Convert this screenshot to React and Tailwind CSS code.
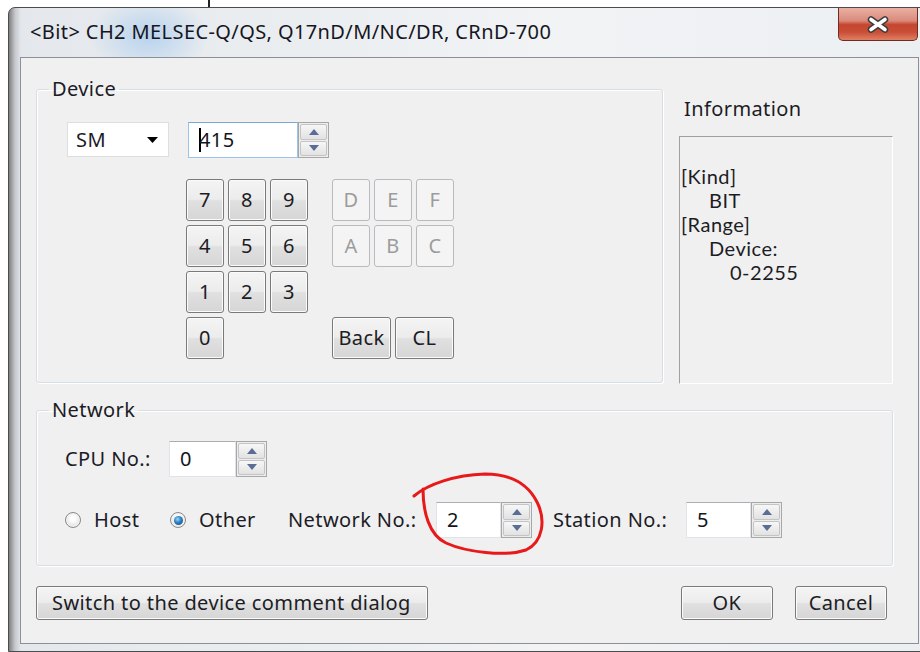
import React from 'react';

const FONT = "font-['Noto_Sans',_'DejaVu_Sans',_sans-serif] tracking-[0.4px]";

// Win7-style push button, with a greyed-out look for keys that don't apply
function Btn({ children, className = '', disabled = false }) {
  return (
    <button
      className={`flex items-center justify-center rounded-[3px] border text-[20px] leading-none ${
        disabled
          ? 'border-[#b7bbbe] bg-[#f4f4f4] text-[#9c9c9c]'
          : 'border-[#7a7a7a] bg-[linear-gradient(to_bottom,#f4f4f4_0%,#ececec_48%,#e0e0e0_52%,#d6d6d6_100%)] text-[#1c1c24] shadow-[inset_0_0_0_1px_#fbfbfb]'
      } ${className}`}
    >
      {children}
    </button>
  );
}

function SpinArrow({ up }) {
  return (
    <div className="flex-1 flex items-center justify-center rounded-[2px] border border-[#c4c4c4] bg-[linear-gradient(to_bottom,#f7f7f7,#e2e2e2)]">
      <svg width="10" height="6" viewBox="0 0 10 6">
        <path d={up ? 'M0 6 L5 0 L10 6 Z' : 'M0 0 L5 6 L10 0 Z'} fill="#5a6d96" />
      </svg>
    </div>
  );
}

// numeric edit box with an up/down spinner on its right
function Spin({ value, className = '', focused = false, caret = false }) {
  return (
    <div className={`flex h-[36px] ${className}`}>
      <div
        className={`flex-1 flex items-center pl-[10px] bg-white border text-[20px] text-[#141420] ${
          focused
            ? 'border-[#9cc3ea] border-t-[#7aa7d6]'
            : 'border-[#e2e3ea] border-t-[#abadb3]'
        }`}
      >
        {caret && <span className="inline-block w-[2px] h-[24px] bg-black -mr-[2px]" />}
        {value}
      </div>
      <div className="w-[31px] flex flex-col gap-[1px] p-[1px] border border-[#a7a7a7] bg-[#ededed]">
        <SpinArrow up />
        <SpinArrow />
      </div>
    </div>
  );
}

function Radio({ checked, label }) {
  return (
    <div className="flex items-center gap-[13px]">
      <span className="w-[16px] h-[16px] rounded-full border border-[#8a8a8a] bg-[radial-gradient(circle_at_50%_40%,#ffffff_20%,#d2d2d2_100%)] shadow-[inset_0_0_0_1px_#f4f4f4] flex items-center justify-center">
        {checked && (
          <span className="w-[9px] h-[9px] rounded-full bg-[radial-gradient(circle_at_40%_35%,#9ad6f7_0%,#2a7cc0_45%,#134a7c_100%)]" />
        )}
      </span>
      <span>{label}</span>
    </div>
  );
}

function Group({ title, className = '', children }) {
  return (
    <fieldset
      className={`rounded-[3px] border border-[#d5dfe5] shadow-[inset_1px_1px_0_#ffffff,1px_1px_0_#ffffff] ${className}`}
    >
      <legend className="ml-[12px] px-[3px] leading-[24px]">{title}</legend>
      {children}
    </fieldset>
  );
}

export default function App() {
  const digits = ['7', '8', '9', '4', '5', '6', '1', '2', '3'];
  const hex = ['D', 'E', 'F', 'A', 'B', 'C'];

  return (
    <div className={`relative w-[920px] h-[652px] overflow-hidden bg-white ${FONT}`}>
      {/* stray text cursor above the window */}
      <div className="h-[7px] flex">
        <div className="ml-[208px] w-[2px] h-[7px] bg-[#222]" />
      </div>

      {/* dialog window */}
      <div className="ml-[8px] w-[924px] h-[645px] rounded-tl-[7px] border border-[#4c4c4c] flex flex-col bg-[radial-gradient(ellipse_60px_40px_at_140px_28px,#b7d3ee_0%,rgba(183,211,238,0)_100%),linear-gradient(to_right,#7f7f7f_0px,#c4c7cb_6px,#e4e8ec_12px,#f1f3f5_60%,#eceff2_100%)]">
        {/* title bar */}
        <div className="h-[49px] flex items-start justify-between">
          <div className="pl-[21px] pt-[12px] text-[20px] leading-[24px] text-[#161622]">
            &lt;Bit&gt; CH2 MELSEC-Q/QS, Q17nD/M/NC/DR, CRnD-700
          </div>
          <div className="mr-[13px] w-[80px] h-[33px] rounded-b-[5px] border border-t-0 border-[#6e2b20] bg-[linear-gradient(to_bottom,#eab0a4_0%,#d98a7b_40%,#c64630_52%,#c94e36_75%,#de8064_100%)] flex items-center justify-center">
            <svg width="26" height="17" viewBox="0 0 26 17">
              <path d="M6 3.5 L20 13.5 M20 3.5 L6 13.5" stroke="#3c3c3c" strokeWidth="6.5" strokeLinecap="round" />
              <path d="M6 3.5 L20 13.5 M20 3.5 L6 13.5" stroke="#ffffff" strokeWidth="3.6" strokeLinecap="round" />
            </svg>
          </div>
        </div>

        {/* client area */}
        <div className="ml-[11px] w-[899px] h-[587px] border border-[#8c9096] bg-[#f0f0f0] text-[20px] text-[#1c1c26] flex flex-col pl-[15px]">
          <div className="flex items-start mt-[19px]">
            <Group title="Device" className="w-[627px] h-[306px]">
              <div className="pl-[30px] pt-[21px]">
                <div className="flex items-start">
                  <div className="w-[102px] h-[35px] bg-white border border-[#dedede] flex items-center justify-between pl-[8px] pr-[10px]">
                    <span>SM</span>
                    <svg width="11" height="6" viewBox="0 0 11 6">
                      <path d="M0 0 L11 0 L5.5 6 Z" fill="#000" />
                    </svg>
                  </div>
                  <Spin value="415" focused caret className="ml-[19px] w-[141px]" />
                </div>

                <div className="flex ml-[119px] mt-[21px]">
                  <div className="grid grid-cols-[38px_38px_38px] auto-rows-[42px] gap-[4px]">
                    {digits.map((d) => (
                      <Btn key={d}>{d}</Btn>
                    ))}
                    <Btn>0</Btn>
                  </div>
                  <div className="ml-[24px] flex flex-col gap-[4px]">
                    <div className="grid grid-cols-[38px_38px_38px] auto-rows-[42px] gap-[4px]">
                      {hex.map((h) => (
                        <Btn key={h} disabled>
                          {h}
                        </Btn>
                      ))}
                    </div>
                    <div className="h-[42px]" />
                    <div className="flex gap-[4px] h-[42px]">
                      <Btn className="w-[59px]">Back</Btn>
                      <Btn className="w-[59px]">CL</Btn>
                    </div>
                  </div>
                </div>
              </div>
            </Group>

            <div className="ml-[16px] mt-[20px] w-[214px]">
              <div className="pl-[5px] leading-[24px]">Information</div>
              <div className="mt-[15px] h-[248px] border border-[#a0a0a0] border-r-white border-b-white pt-[27px] pl-[1px] font-['Lato',_sans-serif] text-[20px] tracking-[0.5px] leading-[24px]">
                <div>[Kind]</div>
                <div className="pl-[28px]">BIT</div>
                <div>[Range]</div>
                <div className="pl-[28px]">Device:</div>
                <div className="pl-[49px]">0-2255</div>
              </div>
            </div>
          </div>

          <Group title="Network" className="mt-[14px] w-[857px] h-[168px]">
            <div className="pl-[28px] pt-[19px]">
              <div className="flex items-center">
                <span className="w-[104px]">CPU No.:</span>
                <Spin value="0" className="w-[98px] h-[35px]" />
              </div>
              <div className="flex items-center mt-[25px]">
                <div className="w-[105px]">
                  <Radio label="Host" />
                </div>
                <div className="w-[118px]">
                  <Radio checked label="Other" />
                </div>
                <span className="w-[148px]">Network No.:</span>
                <Spin value="2" className="w-[96px]" />
                <span className="ml-[21px] w-[133px]">Station No.:</span>
                <Spin value="5" className="w-[96px]" />
              </div>
            </div>
          </Group>

          <div className="mt-[20px] flex items-center pr-[31px]">
            <Btn className="w-[392px] h-[34px] !justify-start pl-[15px]">Switch to the device comment dialog</Btn>
            <div className="flex-1" />
            <Btn className="w-[92px] h-[34px]">OK</Btn>
            <Btn className="ml-[22px] w-[92px] h-[34px]">Cancel</Btn>
          </div>
        </div>
      </div>

      {/* red marker ring drawn around the network number */}
      <svg className="absolute inset-0 pointer-events-none" width="920" height="652" viewBox="0 0 920 652">
        <path
          d="M414 496 C428 484 455 475 485 474 C510 474 528 484 537 502 C546 520 543 542 526 550 C505 557 466 552 446 543 C429 535 423 512 423 489"
          fill="none"
          stroke="#e8191b"
          strokeWidth="3"
          strokeLinecap="round"
        />
      </svg>
    </div>
  );
}
